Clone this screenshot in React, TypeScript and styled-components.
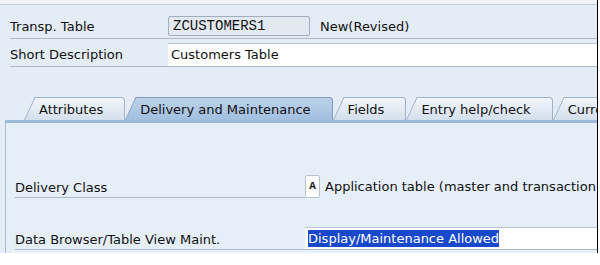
import React from "react";
import styled, { createGlobalStyle } from "styled-components";

type TabType = {
  id: string;
  title: string;
  active?: boolean;
};

const TABS: TabType[] = [
  { id: "attr", title: "Attributes" },
  { id: "deliv", title: "Delivery and Maintenance", active: true },
  { id: "fields", title: "Fields" },
  { id: "help", title: "Entry help/check" },
  { id: "curr", title: "Currency/Quantity Fields" },
];

const App: React.FC = () => {
  return (
    <>
      <GlobalStyle />
      <Screen>
        <TopStrip />
        <Header>
          <HeaderRow $height={33}>
            <Label>Transp. Table</Label>
            <CodeField>ZCUSTOMERS1</CodeField>
            <Status>New(Revised)</Status>
          </HeaderRow>
          <HeaderRow $height={27}>
            <Label>Short Description</Label>
            <TextField>Customers Table</TextField>
          </HeaderRow>
        </Header>
        <TabStrip>
          {TABS.map((tab) => (
            <Tab key={tab.id} $active={!!tab.active}>
              <TabText>{tab.title}</TabText>
            </Tab>
          ))}
        </TabStrip>
        <TabLine />
        <Panel>
          <PanelRow>
            <PanelLabel>Delivery Class</PanelLabel>
            <KeyBox>A</KeyBox>
            <ValueText>Application table (master and transaction data)</ValueText>
          </PanelRow>
          <PanelRow>
            <PanelLabel>Data Browser/Table View Maint.</PanelLabel>
            <SelectField>
              <Selection>Display/Maintenance Allowed</Selection>
            </SelectField>
          </PanelRow>
        </Panel>
      </Screen>
    </>
  );
};

const GlobalStyle = createGlobalStyle`
  html, body {
    margin: 0;
    padding: 0;
    background: #ffffff;
  }
  body {
    font-family: "DejaVu Sans", Verdana, sans-serif;
    font-size: 13px;
    color: #111;
  }
`;

const Screen = styled.div`
  width: 597px;
  height: 253px;
  background-color: #e4ecf5;
  border-right: 1px solid #000;
  display: flex;
  flex-direction: column;
  overflow: hidden;
`;

const TopStrip = styled.div`
  height: 4px;
  flex: none;
  background-color: #eff3f8;
  border-bottom: 1px solid #c1ccd9;
`;

const Header = styled.div`
  display: flex;
  flex-direction: column;
  padding-left: 10px;
`;

const HeaderRow = styled.div<{ $height: number }>`
  height: ${(props) => props.$height}px;
  display: flex;
  align-items: flex-end;
  border-bottom: 1px solid #aeb9c7;
`;

const Label = styled.span`
  width: 158px;
  flex: none;
  line-height: 22px;
  white-space: nowrap;
`;

const CodeField = styled.div`
  width: 142px;
  height: 20px;
  box-sizing: border-box;
  margin-bottom: 2px;
  padding: 0 4px;
  background-color: #e3e9f0;
  border: 1px solid #a2aebd;
  border-radius: 2px;
  font-family: "Liberation Mono", "Courier New", monospace;
  font-size: 14px;
  line-height: 19px;
`;

const Status = styled.span`
  margin-left: 10px;
  line-height: 22px;
`;

const TextField = styled.div`
  flex: 1;
  height: 23px;
  box-sizing: border-box;
  padding: 0 3px;
  background-color: #fff;
  border-top: 1px solid #b8c2ce;
  line-height: 22px;
`;

const TabStrip = styled.div`
  margin-top: 30px;
  height: 23px;
  display: flex;
  padding-left: 24px;
  white-space: nowrap;
`;

const Tab = styled.div<{ $active: boolean }>`
  position: relative;
  z-index: 0;
  flex: none;
  height: 23px;
  padding: 0 22px 0 15px;
  display: flex;
  align-items: center;
  &::before,
  &::after {
    content: "";
    position: absolute;
    z-index: -1;
    top: 0;
    bottom: 0;
    box-sizing: border-box;
    background: ${(props) =>
      props.$active
        ? "linear-gradient(#bcd2ea, #a2bfe0)"
        : "linear-gradient(#f2f6fb, #d3dfec)"};
    border-top: 1px solid ${(props) => (props.$active ? "#7d9cc3" : "#9fb3ca")};
  }
  &::before {
    left: 0;
    width: 26px;
    border-left: 1px solid ${(props) => (props.$active ? "#7d9cc3" : "#9fb3ca")};
    transform: skewX(-25deg);
    transform-origin: bottom left;
  }
  &::after {
    left: 12px;
    right: 0;
    border-right: 1px solid ${(props) => (props.$active ? "#7d9cc3" : "#9fb3ca")};
    border-top-right-radius: 4px;
  }
`;

const TabText = styled.span`
  line-height: 16px;
  padding-top: 2px;
`;

const TabLine = styled.div`
  height: 3px;
  flex: none;
  margin-left: 5px;
  background-color: #9cb9dc;
`;

const Panel = styled.div`
  flex: 1;
  margin-left: 5px;
  border-left: 1px solid #a9bbd0;
  background-color: #e6eef8;
  display: flex;
  flex-direction: column;
  gap: 29px;
  padding: 52px 0 0 9px;
`;

const PanelRow = styled.div`
  height: 23px;
  display: flex;
  align-items: stretch;
`;

const PanelLabel = styled.span`
  width: 290px;
  flex: none;
  box-sizing: border-box;
  border-bottom: 1px solid #aeb9c7;
  line-height: 26px;
  white-space: nowrap;
`;

const KeyBox = styled.span`
  width: 15px;
  flex: none;
  box-sizing: border-box;
  background-color: #fff;
  border: 1px solid #b9c3cf;
  border-radius: 2px;
  font-family: "Liberation Mono", "Courier New", monospace;
  font-weight: bold;
  font-size: 11px;
  line-height: 21px;
  text-align: center;
`;

const ValueText = styled.span`
  margin-left: 5px;
  line-height: 24px;
  white-space: nowrap;
`;

const SelectField = styled.div`
  flex: 1;
  box-sizing: border-box;
  background-color: #fff;
  border-top: 1px solid #b8c2ce;
  border-bottom: 1px solid #aeb9c7;
  padding: 2px 0 0 3px;
  display: flex;
  align-items: flex-start;
`;

const Selection = styled.span`
  background-color: #1848cc;
  color: #fff;
  line-height: 17px;
  white-space: nowrap;
`;

export default App;
